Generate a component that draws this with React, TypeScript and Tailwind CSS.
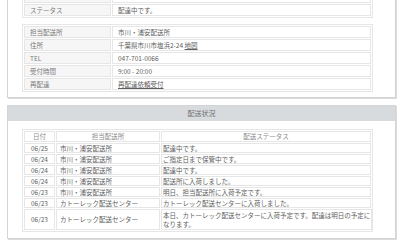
import React from "react";

const cell = "border border-[#e6e6e6] h-[12px] leading-[10px] px-[5px] whitespace-nowrap overflow-hidden";

function InfoTable({ rows, className = "" }: { rows: [string, React.ReactNode][]; className?: string }) {
  return (
    <div className={`w-[351px] border border-[#e6e6e6] p-[1px] flex flex-col gap-[1px] bg-white ${className}`}>
      {rows.map(([k, v], i) => (
        <div key={i} className="grid grid-cols-[87px_1fr] gap-[1px]">
          <div className={`${cell} bg-[#f6f6f6] text-[#7a7a7a]`}>{k}</div>
          <div className={`${cell} bg-white`}>{v}</div>
        </div>
      ))}
    </div>
  );
}

const history: [string, string, React.ReactNode][] = [
  ["06/25", "市川・浦安配送所", "配達中です。"],
  ["06/24", "市川・浦安配送所", "ご指定日まで保管中です。"],
  ["06/24", "市川・浦安配送所", "配達中です。"],
  ["06/24", "市川・浦安配送所", "配送所に入荷しました。"],
  ["06/23", "市川・浦安配送所", "明日、担当配送所に入荷予定です。"],
  ["06/23", "カトーレック配送センター", "カトーレック配送センターに入荷しました。"],
];

export default function App() {
  const c2 = "border border-[#e6e6e6] whitespace-nowrap bg-white";
  return (
    <div className="w-[400px] h-[243px] overflow-hidden bg-white pl-[7px] font-['Noto_Sans_CJK_JP','Noto_Sans',sans-serif] text-[6.5px] text-[#606060]">
      <div className="-mt-[16px] w-[389px] border border-[#d4d4d4] shadow-[1px_1px_0_#dcdcdc] bg-white pl-[14px] pt-[4px] pb-[5px]">
        <InfoTable rows={[["", ""], ["ステータス", "配達中です。"]]} />
        <InfoTable
          className="mt-[6px]"
          rows={[
            ["担当配送所", "市川・浦安配送所"],
            ["住所", <span>千葉県市川市塩浜2-24 <span className="underline">地図</span></span>],
            ["TEL", "047-701-0066"],
            ["受付時間", "9:00 - 20:00"],
            ["再配達", <span className="underline">再配達依頼受付</span>],
          ]}
        />
      </div>

      <div className="mt-[7px] w-[389px] border border-[#d4d4d4] shadow-[1px_1px_0_#dcdcdc] bg-white">
        <div className="h-[15px] leading-[15px] bg-[#d8dbdd] text-center text-[#707070] text-[7px]">配送状況</div>
        <div className="pl-[14px] pt-[8px] pb-[6px]">
          <div className="w-[351px] border border-[#e6e6e6] p-[1px] flex flex-col gap-[1px] bg-white">
            <div className="grid grid-cols-[31px_104px_1fr] gap-[1px] text-[#8a8a8a] text-center">
              <div className={`${c2} h-[11px] leading-[9px] bg-[#f2f2f2]`}>日付</div>
              <div className={`${c2} h-[11px] leading-[9px] bg-[#f2f2f2]`}>担当配送所</div>
              <div className={`${c2} h-[11px] leading-[9px] bg-[#f2f2f2]`}>配送ステータス</div>
            </div>
            {history.map(([d, o, s], i) => (
              <div key={i} className="grid grid-cols-[31px_104px_1fr] gap-[1px]">
                <div className={`${c2} h-[10px] leading-[8px] text-center`}>{d}</div>
                <div className={`${c2} h-[10px] leading-[8px] px-[3px]`}>{o}</div>
                <div className={`${c2} h-[10px] leading-[8px] px-[1px]`}>{s}</div>
              </div>
            ))}
            <div className="grid grid-cols-[31px_104px_1fr] gap-[1px]">
              <div className={`${c2} h-[21px] flex items-center justify-center`}>06/23</div>
              <div className={`${c2} h-[21px] flex items-center px-[3px]`}>カトーレック配送センター</div>
              <div className={`${c2} h-[21px] flex items-center px-[1px] leading-[9px]`}>
                <div>本日、カトーレック配送センターに入荷予定です。配達は明日の予定に<br />なります。</div>
              </div>
            </div>
          </div>
        </div>
      </div>
    </div>
  );
}
